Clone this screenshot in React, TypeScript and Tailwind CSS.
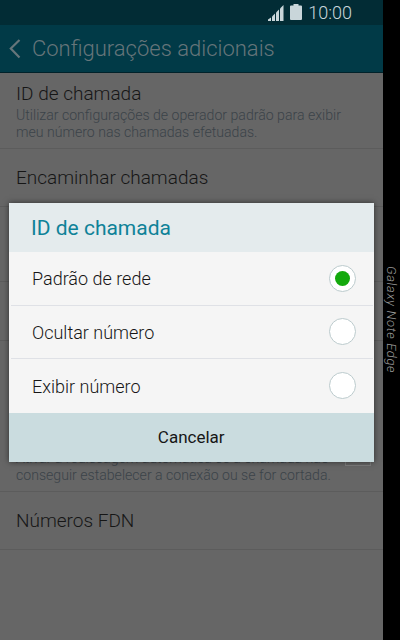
import React from 'react';

const OPTIONS = [
  { label: 'Padrão de rede', selected: true },
  { label: 'Ocultar número', selected: false },
  { label: 'Exibir número', selected: false },
];

function SettingRow({ title, sub, className }: { title?: string; sub?: string[]; className: string }) {
  return (
    <div className={`flex flex-col px-4 border-b border-[#5c5c5c] ${className}`}>
      {title && <p className="text-[19px] leading-[25px] text-[#161616]">{title}</p>}
      {sub && (
        <div className="pt-[1px]">
          {sub.map((line, i) => (
            <p key={i} className="text-[14.1px] leading-[17px] text-[#3b4349] whitespace-nowrap">{line}</p>
          ))}
        </div>
      )}
    </div>
  );
}

export default function App() {
  return (
    <div className="w-[400px] h-[640px] flex bg-black overflow-hidden font-['Roboto',sans-serif] font-light">
      <div className="relative w-[383px] h-full flex flex-col bg-[#666666]">
        {/* Status bar */}
        <div className="h-[25px] bg-[#022c35] flex items-center justify-end pr-[31px] shrink-0">
          <svg width="16" height="16" viewBox="0 0 16 16" className="mr-[6px] mt-[1px]" fill="#c9d6da">
            <path d="M0 16v-1.5L3 12.5V16z" />
            <path d="M4 16v-4.5L7 8.5V16z" />
            <path d="M8 16V7.5L11 4.5V16z" />
            <path d="M12 16V3.5L15.5 0V16z" />
          </svg>
          <svg width="12" height="16" viewBox="0 0 12 16" className="mr-[6px] mt-[-1px]" fill="#c9d6da">
            <path d="M3.5 0h5v1.5H11a1 1 0 0 1 1 1V15a1 1 0 0 1-1 1H1a1 1 0 0 1-1-1V2.5a1 1 0 0 1 1-1h2.5z" />
          </svg>
          <span className="text-[18px] leading-none text-[#c9d6da]">10:00</span>
        </div>

        {/* Action bar */}
        <div className="h-[48px] bg-[#013a47] border-b border-[#01222a] flex items-center shrink-0">
          <svg width="12" height="20" viewBox="0 0 12 20" fill="none" stroke="#66757a" strokeWidth="2.2" className="ml-[9px]">
            <path d="M10.5 1 1.8 9.5l8.7 9" />
          </svg>
          <span className="ml-[11px] text-[22px] leading-none text-[#66757a]">Configurações adicionais</span>
        </div>

        {/* Settings list */}
        <SettingRow
          className="h-[76px] pt-[8px]"
          title="ID de chamada"
          sub={['Utilizar configurações de operador padrão para exibir', 'meu número nas chamadas efetuadas.']}
        />
        <SettingRow className="h-[58px] justify-center" title="Encaminhar chamadas" />
        <SettingRow className="h-[75px]" />
        <SettingRow className="h-[59px]" />
        <div className="relative h-[151px] flex flex-col justify-end px-4 pb-[7px] border-b border-[#5c5c5c]">
          <p className="text-[14.1px] leading-[17px] text-[#3b4349] whitespace-nowrap">Ativar a rediscagem automática se a chamada não</p>
          <p className="text-[14.1px] leading-[17px] text-[#3b4349] whitespace-nowrap">conseguir estabelecer a conexão ou se for cortada.</p>
          <div className="absolute right-[12px] bottom-[25px] w-[26px] h-[27px] border border-[#7d7d7d]" />
        </div>
        <SettingRow className="h-[58px] justify-center" title="Números FDN" />

        {/* Dialog */}
        <div className="absolute left-[9px] top-[203px] w-[364.5px] flex flex-col shadow-[0_0_6px_rgba(0,0,0,0.55)]">
          <div className="h-[49px] bg-[#e4ebed] flex items-center pl-[22px] pt-[1px]">
            <span className="text-[21px] leading-none font-normal text-[#0e8298]">ID de chamada</span>
          </div>
          <div className="bg-[#f5f5f5] flex flex-col">
            {OPTIONS.map((opt, i) => (
              <div
                key={opt.label}
                className={`h-[53.5px] ml-[2px] mr-[1px] flex items-center justify-between pl-[21px] pr-[17px] ${i < 2 ? 'border-b-[1.5px] border-[#dfe1e6]' : ''}`}
              >
                <span className="text-[18px] leading-none pt-[2px] text-[#161616]">{opt.label}</span>
                <span className="w-[27px] h-[27px] rounded-full bg-white border border-[#bccbcd] flex items-center justify-center">
                  {opt.selected && <span className="w-[15px] h-[15px] rounded-full bg-[#13a90c]" />}
                </span>
              </div>
            ))}
          </div>
          <div className="h-[49.5px] bg-[#cadcdf] flex items-center justify-center pt-[1px]">
            <span className="text-[17px] leading-none font-normal text-[#161616]">Cancelar</span>
          </div>
        </div>
      </div>

      {/* Edge strip */}
      <div className="w-[17px] h-full flex justify-center pt-[266px]">
        <span className="[writing-mode:vertical-rl] font-['Roboto',sans-serif] italic font-light text-[13px] tracking-[0.6px] leading-none text-[#9a9a9a] whitespace-nowrap">Galaxy Note Edge</span>
      </div>
    </div>
  );
}
